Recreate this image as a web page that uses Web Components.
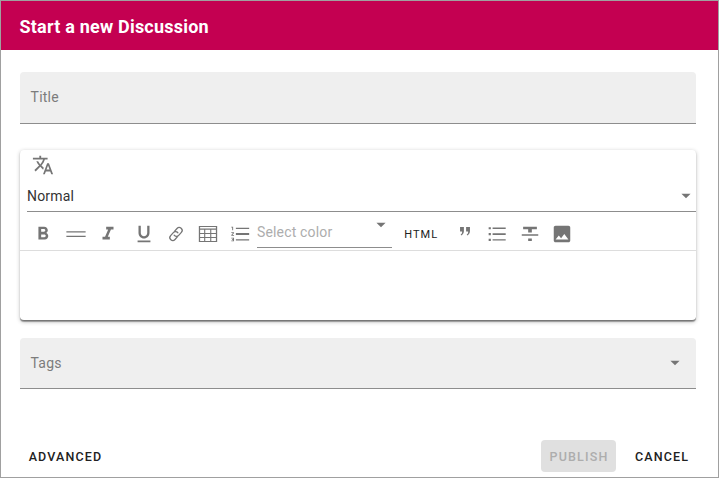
<!DOCTYPE html>
<html lang="en"><head><meta charset="utf-8"><title>Start a new Discussion</title>
<style>
html,body{margin:0;height:100%;background:#fff;font-family:Roboto,"Liberation Sans",sans-serif;color:#212121}
</style></head><body>
<discussion-dialog></discussion-dialog>
<script>
const icons={
translate:'<path d="M12.87 15.07l-2.54-2.51.03-.03c1.74-1.94 2.98-4.17 3.71-6.53H17V4h-7V2H8v2H1v1.99h11.17C11.5 7.92 10.44 9.75 9 11.35 8.07 10.32 7.3 9.19 6.69 8h-2c.73 1.63 1.73 3.17 2.98 4.56l-5.09 5.02L4 19l5-5 3.11 3.11.76-2.04zM18.5 10h-2L12 22h2l1.12-3h4.75L21 22h2l-4.5-12zm-2.62 7l1.62-4.33L19.12 17h-3.24z"/>',
bold:'<path d="M15.6 10.79c.97-.67 1.65-1.77 1.65-2.79 0-2.26-1.75-4-4-4H7v14h7.04c2.09 0 3.71-1.7 3.71-3.79 0-1.52-.86-2.82-2.15-3.42zM10 6.5h3c.83 0 1.5.67 1.5 1.5s-.67 1.5-1.5 1.5h-3v-3zm3.5 9H10v-3h3.500c.83 0 1.500.67 1.500 1.500s-.67 1.500-1.500 1.500z"/>',
rule:'<path d="M1.500 8.900h21v1.500h-21zM1.500 13.800h21v1.500h-21z"/>',
italic:'<path d="M10 4v3h2.210l-3.420 8H6v3h8v-3h-2.210l3.420-8H18V4z"/>',
underline:'<path d="M12 17c3.310 0 6-2.690 6-6V3h-2.500v8c0 1.930-1.570 3.500-3.500 3.500S8.500 12.930 8.500 11V3H6v8c0 3.310 2.690 6 6 6zm-7 2v2h14v-2H5z"/>',
link:'<g transform="rotate(-48 12 12)" fill="none" stroke="currentColor" stroke-width="1.4"><path d="M11.300 15.200H6.800a3.200 3.200 0 0 1 0-6.400h4.400a3.200 3.200 0 0 1 3 4.400"/><path d="M12.700 8.800h4.500a3.200 3.200 0 0 1 0 6.400h-4.400a3.200 3.200 0 0 1-3-4.400"/></g>',
table:'<path fill-rule="evenodd" d="M2 3.200h20v17.600H2zM3.400 4.400v1.500h17.200V4.400zM3.400 7.300v3.500h4.400V7.300zm5.600 0v3.500h5.400V7.300zm6.600 0v3.500h5V7.300zM3.400 12v3.300h4.400V12zM9 12v3.300h5.400V12zm6.600 0v3.300h5V12zM3.400 16.400v3.200h4.400v-3.200zm5.600 0v3.200h5.400v-3.200zm6.600 0v3.200h5v-3.200z"/>',
numbers:'<path d="M2.500 17h2v.5h-1v1h1v.5h-2v1h3v-4h-3v1zm1-9h1V4h-2v1h1v3zm-1 3h1.800l-1.800 2.100v.9h3v-1H3.700l1.800-2.100V10h-3v1zM7.500 5.100v1.500H22V5.100zM7.500 19.100H22v-1.500H7.500zM7.500 13.200H22v-2.200H7.500z"/>',
quote:'<path d="M6.600 4.300h4.200v4.800c0 2.100-1.200 3.800-3 4.500l-.5-1c1.100-.6 1.600-1.700 1.600-3.400H6.600zm6.600 0h4.200v4.800c0 2.100-1.200 3.800-3 4.500l-.5-1c1.100-.6 1.600-1.700 1.600-3.400h-2.300z"/>',
bullets:'<path d="M2.900 4.500h2.400v2.400H2.900zM2.900 10.900h2.400v2.400H2.900zM2.900 17.300h2.400v2.400H2.900zM7.200 5h14.300v1.500H7.200zM7.200 11.100h14.300v2H7.200zM7.200 17.700h14.300v1.500H7.200z"/>',
strike:'<path d="M10 19.500h4V17h-4v2.500zM4.500 4v2.700H10v3.600h4V6.700h5.500V4h-15zM3 14h18v-1.800H3V14z"/>',
image:'<path d="M21 19V5c0-1.100-.9-2-2-2H5c-1.100 0-2 .9-2 2v14c0 1.100.9 2 2 2h14c1.100 0 2-.9 2-2zM8.500 13.500l2.500 3.010L14.500 12l4.500 6H5l3.500-4.500z"/>',
caret:'<path d="M7 9.500l5 5 5-5z"/>'
};
function define(name,html){
 customElements.define(name,class extends HTMLElement{
  connectedCallback(){ if(!this.shadowRoot) this.attachShadow({mode:'open'}).innerHTML=html(this); }
 });
}
define('md-icon',e=>`<style>:host{display:block;flex:none;width:var(--size,22px);height:var(--size,22px);color:#757575}svg{display:block;width:100%;height:100%;fill:currentColor}</style><svg viewBox="0 0 24 24">${icons[e.getAttribute('name')]}</svg>`);
define('tool-button',()=>`<style>:host{display:flex;flex:none;width:32px;height:32px;align-items:center;justify-content:center}:host([wide]){width:33px}:host([text]){width:57px;font-size:11px;font-weight:400;letter-spacing:1.05px}</style><slot></slot>`);
define('filled-field',()=>`<style>:host{display:flex;box-sizing:border-box;height:52px;align-items:center;justify-content:space-between;background:#efefef;border-bottom:1px solid #8d8d8d;border-radius:4px 4px 0 0;padding:0 10px 1px 10.6px;font-size:14px;letter-spacing:.2px;color:#7c7c7c}</style><slot></slot><slot name="end"></slot>`);
define('line-select',()=>`<style>:host{display:flex;box-sizing:border-box;justify-content:space-between;border-bottom:1px solid #8d8d8d;font-size:14px;letter-spacing:.2px}</style><slot></slot><slot name="end"></slot>`);
define('action-button',()=>`<style>:host{display:flex;box-sizing:border-box;height:32px;align-items:center;justify-content:center;border-radius:4px;font-size:12.5px;font-weight:500;letter-spacing:1.15px;white-space:nowrap}:host([disabled]){background:#e0e0e0;color:#adadad}</style><slot></slot>`);
define('rich-editor',()=>`<style>
:host{display:flex;flex-direction:column;height:171px;box-sizing:border-box;border-radius:4px;background:#fff;box-shadow:0 1px 1px rgba(0,0,0,.3),0 1px 4px rgba(0,0,0,.24);border-bottom:1px solid #777}
.lang{height:30px;padding:4px 0 0 12.400px;box-sizing:border-box}
.format{height:32px;margin-left:7px;align-items:center;color:#333}
.format md-icon{margin-right:-.5px}
.bar{height:39px;display:flex;align-items:center;padding:5px 0 0 7px;box-sizing:border-box;border-bottom:1px solid #ddd}
.bar tool-button{padding-left:.8px;box-sizing:border-box}
.u{margin-left:4px}
.color{width:135px;height:29px;color:#adadad;padding-top:5px;line-height:16px;margin-top:-1px;letter-spacing:.16px}
.color md-icon{margin:-10px -.1px 0 0}
.bar tool-button[text]{padding:1px 0 0 1.500px}
</style>
<div class="lang"><md-icon name="translate"></md-icon></div>
<line-select class="format"><span>Normal</span><md-icon slot="end" name="caret"></md-icon></line-select>
<div class="bar">
<tool-button><md-icon name="bold"></md-icon></tool-button><tool-button wide><md-icon name="rule"></md-icon></tool-button><tool-button><md-icon name="italic"></md-icon></tool-button><tool-button class="u"><md-icon name="underline"></md-icon></tool-button><tool-button><md-icon name="link"></md-icon></tool-button><tool-button><md-icon name="table"></md-icon></tool-button><tool-button><md-icon name="numbers"></md-icon></tool-button>
<line-select class="color" style="margin-left:1px"><span>Select color</span><md-icon slot="end" name="caret"></md-icon></line-select>
<tool-button text>HTML</tool-button><tool-button><md-icon name="quote"></md-icon></tool-button><tool-button><md-icon name="bullets"></md-icon></tool-button><tool-button wide><md-icon name="strike"></md-icon></tool-button><tool-button><md-icon name="image"></md-icon></tool-button>
</div>`);
define('discussion-dialog',()=>`<style>
:host{display:flex;flex-direction:column;box-sizing:border-box;width:719px;height:478px;border:1px solid #a0a0a0;background:#fff;overflow:hidden}
header{flex:none;height:49px;box-sizing:border-box;padding:2px 18px 0 18.500px;display:flex;align-items:center;background:#c40051;color:#fff;font-size:18px;font-weight:700;letter-spacing:.21px}
main{padding:22px 22px 0 19px;flex:none}
rich-editor{margin:26px 0 17px}
.tags{height:51px}
footer{display:flex;margin-top:51px;padding:0 22px 0 19px}
.adv{width:91px}.pub{margin-left:auto;width:75px;padding-left:1px}.cancel{width:92px;margin-right:-12px}
</style>
<header>Start a new Discussion</header>
<main><filled-field>Title</filled-field><rich-editor></rich-editor><filled-field class="tags">Tags<md-icon slot="end" name="caret"></md-icon></filled-field></main>
<footer><action-button class="adv">ADVANCED</action-button><action-button class="pub" disabled>PUBLISH</action-button><action-button class="cancel">CANCEL</action-button></footer>`);
</script></body></html>
